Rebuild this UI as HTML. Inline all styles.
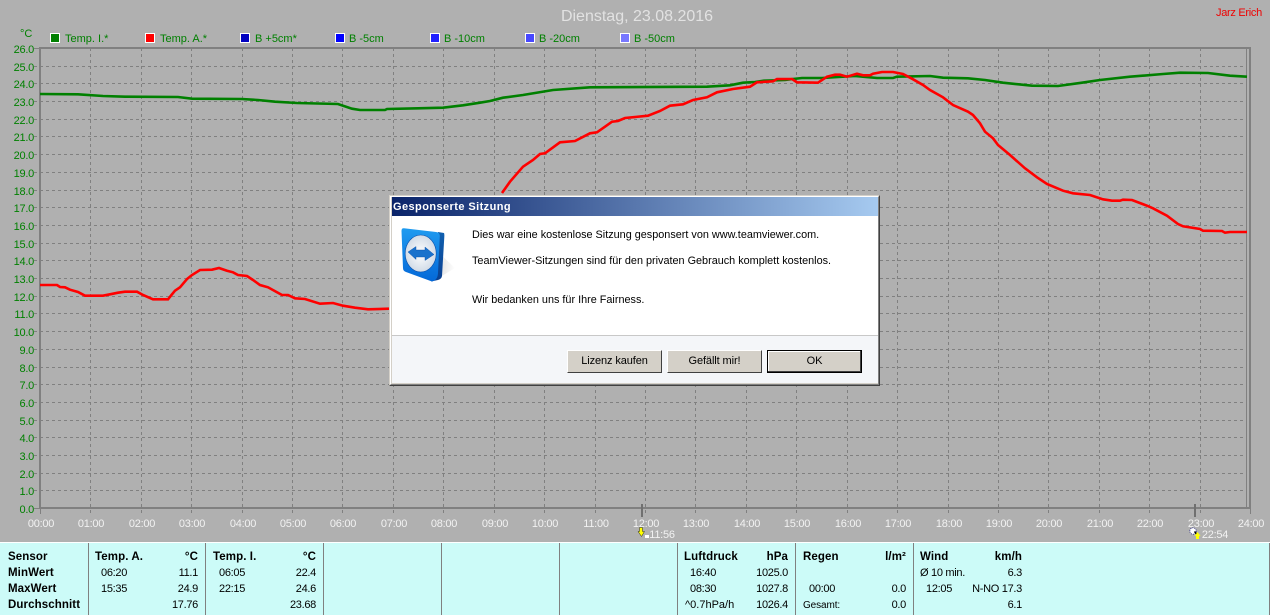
<!DOCTYPE html>
<html lang="de"><head><meta charset="utf-8"><title>Dienstag, 23.08.2016</title>
<style>
html,body{margin:0;padding:0;width:1270px;height:615px;overflow:hidden;background:#b0b0b0;font-family:"Liberation Sans",sans-serif}
svg.c{position:absolute;left:0;top:0}
svg text{font-family:"Liberation Sans",sans-serif;font-size:11px}
.yl text{fill:#008000;text-anchor:end;letter-spacing:-.25px}
.xl text{fill:#f2f2f2;text-anchor:middle;letter-spacing:-.25px}
.lg text{fill:#008000}
.lg rect{stroke:#fff;stroke-width:1}
.p{position:absolute;left:0;top:542px;width:1270px;height:73px;background:#ccfbf8;border-top:1px solid #fff;box-sizing:border-box}
.s{position:absolute;top:543px;width:1px;height:72px;background:#808080}
.t{position:absolute;font-size:11px;line-height:13px;height:13px;white-space:nowrap;color:#000;letter-spacing:-.3px}
.b{font-weight:bold;font-size:11.5px;letter-spacing:.1px}
.r{text-align:right;width:80px}
.dlg{position:absolute;left:389px;top:195px;width:491px;height:191px;box-sizing:border-box;background:#d4d0c8;border:1px solid;border-color:#d4d0c8 #404040 #404040 #d4d0c8}
.in{position:absolute;left:0;top:0;right:0;bottom:0;border:1px solid;border-color:#fff #808080 #808080 #fff}
.tb{position:absolute;left:392px;top:197px;width:486px;height:19px;background:linear-gradient(90deg,#0a246a,#a6caf0);color:#fff;font:bold 11px/21px "Liberation Sans",sans-serif;text-indent:1px;letter-spacing:.42px}
.cl{position:absolute;left:392px;top:216px;width:486px;height:119px;background:#fff}
.sep{position:absolute;left:392px;top:335px;width:486px;height:1px;background:#c8c8c8}
.ft{position:absolute;left:392px;top:336px;width:486px;height:47px;background:#f4f6f9}
.dt{position:absolute;left:472px;font-size:10.85px;line-height:13px;color:#000;white-space:nowrap}
.btn{position:absolute;top:350px;height:23px;box-sizing:border-box;background:#d4d0c8;border:1px solid;border-color:#fff #404040 #404040 #fff;font-size:11px;line-height:21px;text-align:center;color:#000;letter-spacing:-.1px}
</style></head><body>
<svg class="c" width="1270" height="615" viewBox="0 0 1270 615">
<text x="637" y="21" text-anchor="middle" style="font-size:16px" fill="#e2e2e2">Dienstag, 23.08.2016</text>
<text x="1216" y="16" fill="#f00000" style="letter-spacing:-.3px">Jarz Erich</text>
<text x="20" y="37" fill="#008000">°C</text>
<g class="lg">
<rect x="50.5" y="33.5" width="9" height="9" fill="#008000"/><text x="65" y="42">Temp. I.*</text>
<rect x="145.5" y="33.5" width="9" height="9" fill="#ff0000"/><text x="160" y="42">Temp. A.*</text>
<rect x="240.5" y="33.5" width="9" height="9" fill="#0000c0"/><text x="255" y="42">B +5cm*</text>
<rect x="335.5" y="33.5" width="9" height="9" fill="#0000ff"/><text x="349" y="42">B -5cm</text>
<rect x="430.5" y="33.5" width="9" height="9" fill="#2020ff"/><text x="444" y="42">B -10cm</text>
<rect x="525.5" y="33.5" width="9" height="9" fill="#4848ff"/><text x="539" y="42">B -20cm</text>
<rect x="620.5" y="33.5" width="9" height="9" fill="#7878ff"/><text x="634" y="42">B -50cm</text>
</g>
<path stroke="#808080" stroke-width="1" fill="none" stroke-dasharray="3 3" d="M34 66.5H1247M34 83.5H1247M34 101.5H1247M34 119.5H1247M34 136.5H1247M34 154.5H1247M34 172.5H1247M34 190.5H1247M34 207.5H1247M34 225.5H1247M34 243.5H1247M34 260.5H1247M34 278.5H1247M34 296.5H1247M34 313.5H1247M34 331.5H1247M34 349.5H1247M34 367.5H1247M34 384.5H1247M34 402.5H1247M34 420.5H1247M34 437.5H1247M34 455.5H1247M34 473.5H1247M34 490.5H1247"/>
<path stroke="#808080" stroke-width="1" fill="none" stroke-dasharray="3 3" d="M90.5 48V514M141.5 48V514M191.5 48V514M242.5 48V514M292.5 48V514M342.5 48V514M393.5 48V514M443.5 48V514M494.5 48V514M544.5 48V514M595.5 48V514M645.5 48V514M695.5 48V514M746.5 48V514M796.5 48V514M847.5 48V514M897.5 48V514M948.5 48V514M998.5 48V514M1048.5 48V514M1099.5 48V514M1149.5 48V514M1200.5 48V514"/>
<path stroke="#808080" stroke-width="1" fill="none" d="M34 48.5H40M34 508.5H40M40.5 508V514M1250.5 508V514M1246.5 48V508"/>
<rect x="39" y="47" width="2" height="462" fill="#808080"/>
<rect x="39" y="47" width="1212" height="2" fill="#808080"/>
<rect x="39" y="507" width="1212" height="2" fill="#808080"/>
<rect x="1249" y="47" width="2" height="462" fill="#808080"/>
<polyline fill="none" stroke="#008000" stroke-width="2.6" points="40,94 78,94.3 103,96 125,96.7 178,97 192,98.7 242,99 258,100 275,101.7 297,103 338,104 352,108.7 360,110 385,110 387,109 418,108.3 443,107.7 463,105.3 480,102.7 490,101 503,97.7 523,95 553,90 590,87.3 707,86.7 730,85.3 743,82.7 755,82 764,80.7 785,80 793,79 802,78 822,78 855,76 863,76.7 877,78 893,78 897,76.7 930,76 943,77.7 968,78.3 985,80 1003,82.7 1032,85.7 1058,86 1082,82.7 1100,80 1130,76.7 1163,74 1180,72.7 1208,73 1230,75.7 1247,76.7"/>
<polyline fill="none" stroke="#ff0000" stroke-width="2.6" points="40,285 57,285 60,287 65,287.3 70,289.7 78,292 85,295.7 103,295.7 110,294.3 118,292.7 125,291.7 137,291.7 143,295 153,299.3 168,299.3 172,294.3 175,290.7 180,287.3 187,279 192,275 200,270 212,269.7 219,268 227,270.7 233,272.3 238,275 247,276 253,280 260,285 268,287.3 277,292.3 282,295 288,295 295,298.3 305,299 320,303.7 333,303 343,305.7 355,307.7 368,309.3 389,308.7"/>
<polyline fill="none" stroke="#ff0000" stroke-width="2.6" points="502,193 510,181.7 523,166.7 533,160 540,154 545,153.3 560,142.3 575,141 590,133.3 597,132.3 605,126.7 612,121.7 618,121 625,118 648,115.7 660,111 670,105.7 683,104.3 693,100 707,97.3 717,92.3 733,89 750,86.7 757,82.3 773,81.3 777,79 792,79 797,82.3 818,82.7 827,76.7 835,74.7 840,74.7 847,76.7 857,73.7 863,75.3 870,75.3 873,73.7 882,72 893,72 903,74 912,78.7 923,85 930,90 943,97.3 953,105 968,111.7 973,115 980,123.3 985,131.7 993,138.3 998,145 1010,155 1025,168.3 1037,177.3 1047,184 1063,190.7 1073,193.3 1090,195 1103,199.3 1112,200.7 1120,200.7 1123,199.7 1132,200 1147,205.7 1153,208.3 1167,215.7 1178,224 1183,226.3 1200,229 1203,230.7 1222,231 1225,232.7 1230,232 1247,232"/>
<g class="yl">
<text x="34" y="53">26.0</text><text x="34" y="71">25.0</text><text x="34" y="88">24.0</text><text x="34" y="106">23.0</text><text x="34" y="124">22.0</text><text x="34" y="141">21.0</text><text x="34" y="159">20.0</text><text x="34" y="177">19.0</text><text x="34" y="195">18.0</text><text x="34" y="212">17.0</text><text x="34" y="230">16.0</text><text x="34" y="248">15.0</text><text x="34" y="265">14.0</text><text x="34" y="283">13.0</text><text x="34" y="301">12.0</text><text x="34" y="318">11.0</text><text x="34" y="336">10.0</text><text x="34" y="354">9.0</text><text x="34" y="372">8.0</text><text x="34" y="389">7.0</text><text x="34" y="407">6.0</text><text x="34" y="425">5.0</text><text x="34" y="442">4.0</text><text x="34" y="460">3.0</text><text x="34" y="478">2.0</text><text x="34" y="495">1.0</text><text x="34" y="513">0.0</text>
</g>
<g class="xl">
<text x="41" y="527">00:00</text><text x="91" y="527">01:00</text><text x="142" y="527">02:00</text><text x="192" y="527">03:00</text><text x="243" y="527">04:00</text><text x="293" y="527">05:00</text><text x="343" y="527">06:00</text><text x="394" y="527">07:00</text><text x="444" y="527">08:00</text><text x="495" y="527">09:00</text><text x="545" y="527">10:00</text><text x="596" y="527">11:00</text><text x="646" y="527">12:00</text><text x="696" y="527">13:00</text><text x="747" y="527">14:00</text><text x="797" y="527">15:00</text><text x="848" y="527">16:00</text><text x="898" y="527">17:00</text><text x="949" y="527">18:00</text><text x="999" y="527">19:00</text><text x="1049" y="527">20:00</text><text x="1100" y="527">21:00</text><text x="1150" y="527">22:00</text><text x="1201" y="527">23:00</text><text x="1251" y="527">24:00</text>
<text x="662" y="538">11:56</text><text x="1215" y="538">22:54</text>
</g>
<rect x="641" y="504" width="2" height="13" fill="#707070"/>
<rect x="1194" y="504" width="2" height="13" fill="#707070"/>
<path d="M639.500 527.500h3v4h2l-3 5-3.500-5h1.500z" fill="#ffff00" stroke="#202020" stroke-width=".5"/>
<rect x="645" y="535" width="4" height="3" fill="#fff"/>
<circle cx="1193" cy="531" r="3.2" fill="#fff" stroke="#202080" stroke-width=".8" stroke-dasharray="1 1"/>
<path d="M1194.500 531.500l2.500 3" stroke="#000" stroke-width="1.4"/>
<path d="M1197.500 532l3 4h-1.500v3h-3v-3h-1.500z" fill="#ffff00"/>
</svg>

<div class="p"></div>
<div class="s" style="left:88px"></div><div class="s" style="left:205px"></div><div class="s" style="left:323px"></div><div class="s" style="left:441px"></div><div class="s" style="left:559px"></div><div class="s" style="left:677px"></div><div class="s" style="left:795px"></div><div class="s" style="left:913px"></div>
<div class="s" style="left:1269px"></div>

<div class="t b" style="left:8px;top:551px">Sensor</div><div class="t b" style="left:8px;top:567px">MinWert</div><div class="t b" style="left:8px;top:583px">MaxWert</div><div class="t b" style="left:8px;top:599px">Durchschnitt</div>

<div class="t b" style="left:95px;top:551px">Temp. A.</div><div class="t b r" style="left:118px;top:551px">°C</div>
<div class="t" style="left:101px;top:567px">06:20</div><div class="t r" style="left:118px;top:567px">11.1</div>
<div class="t" style="left:101px;top:583px">15:35</div><div class="t r" style="left:118px;top:583px">24.9</div>
<div class="t r" style="left:118px;top:599px">17.76</div>

<div class="t b" style="left:213px;top:551px">Temp. I.</div><div class="t b r" style="left:236px;top:551px">°C</div>
<div class="t" style="left:219px;top:567px">06:05</div><div class="t r" style="left:236px;top:567px">22.4</div>
<div class="t" style="left:219px;top:583px">22:15</div><div class="t r" style="left:236px;top:583px">24.6</div>
<div class="t r" style="left:236px;top:599px">23.68</div>

<div class="t b" style="left:684px;top:551px">Luftdruck</div><div class="t b r" style="left:708px;top:551px">hPa</div>
<div class="t" style="left:690px;top:567px">16:40</div><div class="t r" style="left:708px;top:567px">1025.0</div>
<div class="t" style="left:690px;top:583px">08:30</div><div class="t r" style="left:708px;top:583px">1027.8</div>
<div class="t" style="left:685px;top:599px;letter-spacing:0">^0.7hPa/h</div><div class="t r" style="left:708px;top:599px">1026.4</div>

<div class="t b" style="left:803px;top:551px">Regen</div><div class="t b r" style="left:826px;top:551px">l/m²</div>
<div class="t" style="left:809px;top:583px">00:00</div><div class="t r" style="left:826px;top:583px">0.0</div>
<div class="t" style="left:803px;top:599px;font-size:10px;letter-spacing:-.1px">Gesamt:</div><div class="t r" style="left:826px;top:599px">0.0</div>

<div class="t b" style="left:920px;top:551px">Wind</div><div class="t b r" style="left:942px;top:551px">km/h</div>
<div class="t" style="left:920px;top:567px">Ø 10 min.</div><div class="t r" style="left:942px;top:567px">6.3</div>
<div class="t" style="left:926px;top:583px">12:05</div><div class="t r" style="left:942px;top:583px">N-NO 17.3</div>
<div class="t r" style="left:942px;top:599px">6.1</div>

<div class="dlg"><div class="in"></div></div>
<div class="tb">Gesponserte Sitzung</div>
<div class="cl"></div><div class="sep"></div><div class="ft"></div>
<svg class="c" width="1270" height="615" viewBox="0 0 1270 615">
<defs>
<linearGradient id="g1" x1="0" y1="0" x2="0" y2="1"><stop offset="0" stop-color="#1f9bf0"/><stop offset="1" stop-color="#0468d8"/></linearGradient>
<linearGradient id="g2" x1="0" y1="0" x2="0" y2="1"><stop offset="0" stop-color="#1060b0"/><stop offset="1" stop-color="#0a3f90"/></linearGradient>
<radialGradient id="g3" cx=".5" cy=".5" r=".6"><stop offset="0" stop-color="#ffffff"/><stop offset="1" stop-color="#c8d4e2"/></radialGradient>
<radialGradient id="g4" cx=".2" cy=".5" r=".8"><stop offset="0" stop-color="#dcdcdc"/><stop offset="1" stop-color="#ffffff"/></radialGradient>
</defs>
<path d="M436 250L455 268L432 282Z" fill="url(#g4)"/>
<path d="M438 232L444 233Q444.500 234 444.300 237L442 276Q441.500 279 438 280L431 281.500L436 276Z" fill="url(#g2)"/>
<path d="M404 228.300L436 232Q440 232.500 439.800 236L438 273Q437.800 280 432 281.500L406 272Q403 271 403 268L401.500 231Q401.500 228 404 228.300Z" fill="url(#g1)"/>
<ellipse cx="420.700" cy="253.500" rx="15.500" ry="18.500" fill="url(#g3)" stroke="#0a4ea8" stroke-width=".6"/>
<path d="M408 252L416 246.500V250H425V247L434 254.500L425 260.500V257H416V259.500Z" fill="#1a72cc" stroke="#0a4ea8" stroke-width=".4"/>
</svg>
<div class="dt" style="top:229px">Dies war eine kostenlose Sitzung gesponsert von www.teamviewer.com.</div>
<div class="dt" style="top:255px">TeamViewer-Sitzungen sind für den privaten Gebrauch komplett kostenlos.</div>
<div class="dt" style="top:294px">Wir bedanken uns für Ihre Fairness.</div>
<div class="btn" style="left:567px;width:95px">Lizenz kaufen</div>
<div class="btn" style="left:667px;width:95px">Gefällt mir!</div>
<div class="btn" style="left:767px;width:95px;border:1px solid #000;line-height:21px;box-shadow:inset -1px -1px 0 #404040,inset 1px 1px 0 #fff">OK</div>
</body></html>
